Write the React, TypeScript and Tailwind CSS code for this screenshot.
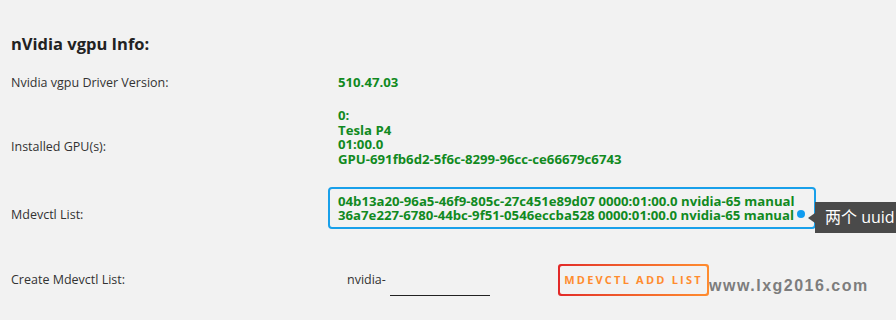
export default function App() {
  const font = { fontFamily: '"Open Sans", "Noto Sans CJK SC", sans-serif' };
  return (
    <div className="relative w-[896px] h-[320px] overflow-hidden bg-[#f2f2f2] text-[#333]" style={font}>
      <div className="pl-[11px] pt-[32px]">
        <h2 className="text-[16.5px] leading-[24px] font-bold text-[#222]">nVidia vgpu Info:</h2>

        <div className="mt-[19px] flex text-[12.5px] leading-[15px]">
          <div className="w-[317px]">Nvidia vgpu Driver Version:</div>
          <div className="pl-[10px] text-[13.2px] font-bold text-[#118a1f]">510.47.03</div>
        </div>

        <div className="mt-[18px] flex text-[12.5px] leading-[15px]">
          <div className="w-[317px] pt-[31px]">Installed GPU(s):</div>
          <div className="pl-[10px] text-[13.2px] leading-[14.7px] font-bold text-[#118a1f]">
            <div>0:</div>
            <div>Tesla P4</div>
            <div>01:00.0</div>
            <div>GPU-691fb6d2-5f6c-8299-96cc-ce66679c6743</div>
          </div>
        </div>

        <div className="mt-[20px] flex text-[12.5px] leading-[14px]">
          <div className="w-[317px] pt-[21px]">Mdevctl List:</div>
          <div className="relative w-[488px] h-[42px] rounded-[4px] border-2 border-[#19a0ea] pl-[8px] pt-[5px] text-[13.2px] font-bold text-[#118a1f]">
            <div>04b13a20-96a5-46f9-805c-27c451e89d07 0000:01:00.0 nvidia-65 manual</div>
            <div>36a7e227-6780-44bc-9f51-0546eccba528 0000:01:00.0 nvidia-65 manual</div>
            <span className="absolute left-[467px] top-[21px] w-[8px] h-[8px] rounded-full bg-[#109cf0]" />
          </div>
        </div>

        <div className="mt-[35px] flex items-center text-[12.5px] leading-[15px]">
          <div className="w-[317px]">Create Mdevctl List:</div>
          <div className="flex items-center pl-[19px]">
            <span className="w-[43px]">nvidia-</span>
            <span className="mt-[31px] w-[100px] border-b border-[#222]" />
            <button className="ml-[68px] h-[32px] w-[151px] rounded-[3px] p-[2px] bg-gradient-to-r from-[#e22828] to-[#ff8c2f]">
              <span className="flex h-full w-full items-center justify-center rounded-[2px] bg-[#f2f2f2] text-[11px] font-bold tracking-[2.2px] text-[#ff8c2f]">
                MDEVCTL ADD LIST
              </span>
            </button>
          </div>
        </div>
      </div>

      <div className="absolute left-[808px] top-[202px] flex items-center">
        <span className="w-0 h-0 border-y-[5px] border-y-transparent border-r-[7px] border-r-[#4a4a4a]" />
        <div className="h-[31px] w-[120px] bg-[#4a4a4a] pl-[10px] text-[16px] leading-[31px] text-white">两个 uuid</div>
      </div>

      <div className="absolute left-[709px] top-[274px] text-[16px] font-bold tracking-[1.5px] text-[#7d7d7d]" style={{ fontFamily: '"Liberation Sans", sans-serif' }}>
        www.lxg2016.com
      </div>
    </div>
  );
}
